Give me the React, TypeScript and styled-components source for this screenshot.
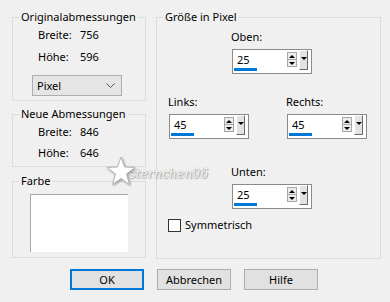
import React from "react";
import styled, { createGlobalStyle } from "styled-components";

const GlobalStyle = createGlobalStyle`
  html, body { margin: 0; padding: 0; background: #f0f0f0; }
  body { font-family: "Noto Sans", "Segoe UI", sans-serif; font-size: 11px; color: #000; }
`;

const Dialog = styled.div`
  position: relative;
  width: 390px;
  height: 302px;
  box-sizing: border-box;
  padding: 9px 0 0 12px;
  overflow: hidden;
  background: #f0f0f0;
`;

const Main = styled.div`
  display: grid;
  grid-template-columns: 134px 225px;
  column-gap: 10px;
`;

const LeftCol = styled.div`
  display: flex;
  flex-direction: column;
`;

const Group = styled.fieldset<{ $h: number; $mt?: number }>`
  margin: ${(p) => p.$mt ?? 0}px 0 0 0;
  padding: 0;
  min-width: 0;
  height: ${(p) => p.$h}px;
  box-sizing: border-box;
  border: 1px solid #dcdcdc;
`;

const Legend = styled.legend`
  margin-left: 6px;
  padding: 0 2px;
  line-height: 16px;
  font-size: 11px;
`;

const InfoList = styled.div<{ $gap: number }>`
  display: grid;
  grid-template-columns: 42px auto;
  row-gap: ${(p) => p.$gap}px;
  padding: 2px 0 0 25px;
  line-height: 16px;
`;

const Select = styled.div`
  display: flex;
  align-items: center;
  justify-content: space-between;
  box-sizing: border-box;
  width: 90px;
  height: 21px;
  margin: 10px 0 0 19px;
  padding: 0 6px 0 4px;
  border: 1px solid #adadad;
  background: #e5e5e5;
  line-height: 16px;
`;

const ColorWell = styled.div`
  box-sizing: border-box;
  width: 98px;
  height: 58px;
  margin: 5px 0 0 17px;
  background: #fff;
  border-top: 1px solid #a8a8a8;
  border-left: 1px solid #a8a8a8;
`;

const RightBody = styled.div`
  display: flex;
  flex-direction: column;
  padding-top: 4px;
`;

const FieldBlock = styled.div<{ $ml?: number; $mt?: number }>`
  display: flex;
  flex-direction: column;
  align-items: flex-start;
  margin-left: ${(p) => p.$ml ?? 0}px;
  margin-top: ${(p) => p.$mt ?? 0}px;
`;

const FieldLabel = styled.span`
  line-height: 16px;
  margin-bottom: 4px;
`;

const PairRow = styled.div`
  display: grid;
  grid-template-columns: 80px 80px;
  column-gap: 38px;
  margin: 20px 0 0 11px;
`;

const Spin = styled.div`
  display: flex;
  box-sizing: border-box;
  width: 80px;
  height: 25px;
  margin-left: 1px;
  padding: 0 3px 0 1px;
  border: 1px solid #8a8a8a;
  background: #fff;
`;

const ValueCol = styled.div`
  display: flex;
  flex-direction: column;
  flex: 1;
  padding-top: 2px;
`;

const Value = styled.span`
  line-height: 16px;
  padding-left: 3px;
`;

const Bar = styled.div`
  width: 23px;
  height: 3px;
  background: #0078d7;
`;

const Spinner = styled.div`
  display: flex;
  flex-direction: column;
  width: 10px;
  margin-top: 2px;
`;

const SpinHalf = styled.div<{ $top?: boolean }>`
  display: flex;
  align-items: center;
  justify-content: center;
  box-sizing: border-box;
  height: ${(p) => (p.$top ? 8 : 7)}px;
  border: 1px solid #a8a8a8;
  border-top-width: ${(p) => (p.$top ? 1 : 0)}px;
  background: #ececec;
`;

const Arrow = styled.span<{ $up?: boolean }>`
  width: 0;
  height: 0;
  border-left: 3px solid transparent;
  border-right: 3px solid transparent;
  ${(p) => (p.$up ? "border-bottom: 3px solid #000;" : "border-top: 3px solid #000;")}
`;

const DropBtn = styled.div`
  display: flex;
  justify-content: center;
  box-sizing: border-box;
  width: 9px;
  height: 20px;
  margin-left: 2px;
  padding-top: 6px;
  background: #e3e3e3;
  border-top: 1px solid #fff;
  border-left: 1px solid #fff;
  border-right: 1px solid #6a6a6a;
  border-bottom: 1px solid #6a6a6a;
`;

const CheckRow = styled.label`
  display: flex;
  align-items: center;
  gap: 4px;
  margin: 8px 0 0 11px;
  line-height: 16px;
`;

const CheckBox = styled.span`
  box-sizing: border-box;
  width: 13px;
  height: 13px;
  border: 1px solid #333;
  background: #fff;
`;

const ButtonRow = styled.div`
  display: flex;
  gap: 13px;
  margin: 10px 0 0 58px;
`;

const Button = styled.button<{ $default?: boolean }>`
  box-sizing: border-box;
  width: 74px;
  height: 21px;
  padding: 0;
  font-family: inherit;
  font-size: 11px;
  color: #000;
  background: #e1e1e1;
  border: ${(p) => (p.$default ? "2px solid #0078d7" : "1px solid #adadad")};
`;

const Watermark = styled.div`
  position: absolute;
  left: 106px;
  top: 156px;
  display: flex;
  align-items: center;
  pointer-events: none;
`;

const WatermarkText = styled.span`
  margin-left: -7px;
  margin-top: 6px;
  font-family: "DejaVu Serif", serif;
  font-style: italic;
  font-size: 12px;
  letter-spacing: 0.3px;
  color: #fff;
  text-shadow: 0 0 1px #777, 1px 1px 1px #aaa;
`;

function SpinField({ value }: { value: string }) {
  return (
    <Spin>
      <ValueCol>
        <Value>{value}</Value>
        <Bar />
      </ValueCol>
      <Spinner>
        <SpinHalf $top>
          <Arrow $up />
        </SpinHalf>
        <SpinHalf>
          <Arrow />
        </SpinHalf>
      </Spinner>
      <DropBtn>
        <Arrow />
      </DropBtn>
    </Spin>
  );
}

export default function App() {
  return (
    <>
      <GlobalStyle />
      <Dialog>
        <Main>
          <LeftCol>
            <Group $h={92}>
              <Legend>Originalabmessungen</Legend>
              <InfoList $gap={6}>
                <span>Breite:</span>
                <span>756</span>
                <span>Höhe:</span>
                <span>596</span>
              </InfoList>
              <Select>
                <span>Pixel</span>
                <svg width="9" height="5" viewBox="0 0 9 5">
                  <path d="M0.5 0.5 L4.5 4.5 L8.5 0.5" fill="none" stroke="#555" strokeWidth="1" />
                </svg>
              </Select>
            </Group>
            <Group $h={61} $mt={5}>
              <Legend>Neue Abmessungen</Legend>
              <InfoList $gap={5}>
                <span>Breite:</span>
                <span>846</span>
                <span>Höhe:</span>
                <span>646</span>
              </InfoList>
            </Group>
            <Group $h={85} $mt={6}>
              <Legend>Farbe</Legend>
              <ColorWell />
            </Group>
          </LeftCol>
          <Group $h={250}>
            <Legend>Größe in Pixel</Legend>
            <RightBody>
              <FieldBlock $ml={74}>
                <FieldLabel>Oben:</FieldLabel>
                <SpinField value="25" />
              </FieldBlock>
              <PairRow>
                <FieldBlock>
                  <FieldLabel>Links:</FieldLabel>
                  <SpinField value="45" />
                </FieldBlock>
                <FieldBlock>
                  <FieldLabel>Rechts:</FieldLabel>
                  <SpinField value="45" />
                </FieldBlock>
              </PairRow>
              <FieldBlock $ml={74} $mt={25}>
                <FieldLabel>Unten:</FieldLabel>
                <SpinField value="25" />
              </FieldBlock>
              <CheckRow>
                <CheckBox />
                <span>Symmetrisch</span>
              </CheckRow>
            </RightBody>
          </Group>
        </Main>
        <ButtonRow>
          <Button $default>OK</Button>
          <Button>Abbrechen</Button>
          <Button>Hilfe</Button>
        </ButtonRow>
        <Watermark>
          <svg width="30" height="30" viewBox="0 0 30 30" style={{ filter: "drop-shadow(1px 1px 1px rgba(0,0,0,0.35))" }}>
            <polygon
              points="15,1 18.5,11 29,11.5 20.5,18 23.5,28.5 15,22.5 6.5,28.5 9.5,18 1,11.5 11.5,11"
              fill="#fff"
              stroke="#b5b5b5"
              strokeWidth="1"
            />
          </svg>
          <WatermarkText>sternchen06</WatermarkText>
        </Watermark>
      </Dialog>
    </>
  );
}
